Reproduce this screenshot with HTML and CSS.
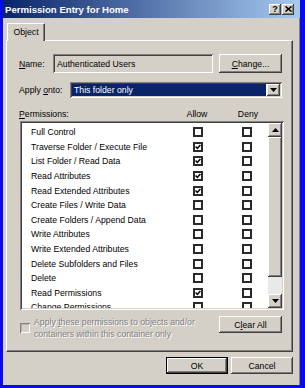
FILE: index.html
```html
<!DOCTYPE html>
<html lang="en">
<head>
  <meta charset="UTF-8" />
  <meta name="viewport" content="width=device-width, initial-scale=1.0"/>
  <title>Permission Entry for Home</title>
  <link rel="stylesheet" href="styles.css">
</head>
<body>
  <div class="window">
    <div class="titlebar">
      <span class="title">Permission Entry for Home</span>
      <div class="titleBtns">
        <span class="tbtn">?</span>
        <span class="tbtn">
          <svg width="7" height="6" viewBox="0 0 7 6"><path d="M0.5 0.5 L6.5 5.5 M6.5 0.5 L0.5 5.5" stroke="#000" stroke-width="1.6"/></svg>
        </span>
      </div>
    </div>

    <div class="tabs">
      <div class="tab">Object</div>
    </div>

    <div class="panel">
      <div class="nameRow">
        <span class="nameLabel"><u>N</u>ame:</span>
        <div class="textbox">Authenticated Users</div>
        <span class="btn changeBtn"><u>C</u>hange...</span>
      </div>

      <div class="applyRow">
        <span class="applyLabel">Apply <u>o</u>nto:</span>
        <div class="select">
          <span class="selText">This folder only</span>
          <span class="dropBtn">
            <svg width="7" height="4" viewBox="0 0 7 4"><polygon points="0,0 7,0 3.5,4" fill="#000"/></svg>
          </span>
        </div>
      </div>

      <div class="permHead">
        <span><u>P</u>ermissions:</span>
        <span class="colHead">Allow</span>
        <span class="colHead">Deny</span>
      </div>

      <div class="list">
        <div class="rows" id="rows"></div>
        <div class="scrollbar">
          <span class="sbBtn">
            <svg width="7" height="4" viewBox="0 0 7 4"><polygon points="0,4 7,4 3.5,0" fill="#000"/></svg>
          </span>
          <span class="sbThumb"></span>
          <span class="sbTrack"></span>
          <span class="sbBtn">
            <svg width="7" height="4" viewBox="0 0 7 4"><polygon points="0,0 7,0 3.5,4" fill="#000"/></svg>
          </span>
        </div>
      </div>

      <div class="bottomRow">
        <div class="applyChild">
          <span class="chk disabled"></span>
          <span class="disabledText">Apply <u>t</u>hese permissions to objects and/or<br>containers within this container only</span>
        </div>
        <span class="btn clearBtn">C<u>l</u>ear All</span>
      </div>
    </div>

    <div class="dialogBtns">
      <span class="btn okBtn">OK</span>
      <span class="btn">Cancel</span>
    </div>
  </div>

  <script>
    const perms = [
      ['Full Control', false],
      ['Traverse Folder / Execute File', true],
      ['List Folder / Read Data', true],
      ['Read Attributes', true],
      ['Read Extended Attributes', true],
      ['Create Files / Write Data', false],
      ['Create Folders / Append Data', false],
      ['Write Attributes', false],
      ['Write Extended Attributes', false],
      ['Delete Subfolders and Files', false],
      ['Delete', false],
      ['Read Permissions', true],
      ['Change Permissions', false]
    ];

    const tick = '<svg width="6" height="6" viewBox="0 0 6 6"><path d="M0.6 2.6 L2.3 4.4 L5.4 0.9" fill="none" stroke="#000" stroke-width="1.5"/></svg>';

    const rows = document.getElementById('rows');
    perms.forEach(([name, allow]) => {
      const row = document.createElement('div');
      row.className = 'permRow';
      row.innerHTML =
        '<span>' + name + '</span>' +
        '<span class="chk">' + (allow ? tick : '') + '</span>' +
        '<span class="chk"></span>';
      rows.appendChild(row);
    });
  </script>
</body>
</html>
```

FILE: styles.css
```css
body {
  margin: 0;
  padding: 0 5px 3px 3px;
  background: #0a0af0;
  font-family: "Liberation Sans", Arial, sans-serif;
  font-size: 8.7px;
  color: #000;
}
u {
  text-decoration: underline;
}

.window {
  height: 385px;
  background: #d4d0c8;
  box-shadow: inset -1px 0 #808080;
}

/* タイトルバー */
.titlebar {
  height: 18px;
  display: flex;
  align-items: center;
  justify-content: space-between;
  padding: 0 6px 0 2px;
  background: linear-gradient(to right, #0a246a, #a6caf0);
}
.title {
  color: #fff;
  font-weight: bold;
  font-size: 9.6px;
}
.titleBtns {
  display: flex;
  gap: 1px;
}
.tbtn {
  width: 12px;
  height: 11px;
  display: flex;
  align-items: center;
  justify-content: center;
  background: #d4d0c8;
  font-weight: bold;
  font-size: 9px;
  box-shadow: inset -1px -1px #404040, inset 1px 1px #fff, inset -2px -2px #808080;
}

/* タブ */
.tabs {
  height: 22px;
  box-sizing: border-box;
  padding: 5px 0 0 4px;
}
.tab {
  position: relative;
  z-index: 1;
  width: 38px;
  height: 18px;
  box-sizing: border-box;
  padding-bottom: 1px;
  display: flex;
  align-items: center;
  justify-content: center;
  background: #d4d0c8;
  border-top: 1px solid #fff;
  border-left: 1px solid #fff;
  border-right: 1px solid #404040;
  box-shadow: inset -1px 0 #808080;
}

.panel {
  margin-left: 3px;
  width: 287px;
  height: 312px;
  box-sizing: border-box;
  padding: 13px 10px 0 12px;
  display: flex;
  flex-direction: column;
  border-top: 1px solid #fff;
  border-left: 1px solid #fff;
  border-right: 1px solid #404040;
  border-bottom: 1px solid #404040;
  box-shadow: inset -1px -1px #808080;
}

/* ボタン */
.btn {
  width: 62px;
  height: 17px;
  box-sizing: border-box;
  display: flex;
  align-items: center;
  justify-content: center;
  background: #d4d0c8;
  box-shadow: inset -1px -1px #404040, inset 1px 1px #fff, inset -2px -2px #808080;
}
.okBtn {
  box-shadow: inset 0 0 0 1px #000, inset -2px -2px #404040, inset 2px 2px #fff, inset -3px -3px #808080;
}

.nameRow {
  height: 19px;
  display: flex;
  align-items: center;
}
.nameLabel {
  width: 34px;
}
.textbox {
  width: 160px;
  height: 19px;
  box-sizing: border-box;
  padding-left: 4px;
  display: flex;
  align-items: center;
  box-shadow: inset 1px 1px #808080, inset -1px -1px #fff, inset 2px 2px #404040, inset -2px -2px #d4d0c8;
}
.changeBtn {
  width: 63px;
  height: 19px;
  margin-left: 6px;
}

.applyRow {
  margin-top: 9px;
  height: 16px;
  display: flex;
  align-items: center;
}
.applyLabel {
  width: 51px;
}
.select {
  width: 212px;
  height: 16px;
  box-sizing: border-box;
  padding: 2px;
  display: flex;
  gap: 1px;
  background: #fff;
  box-shadow: inset 1px 1px #808080, inset -1px -1px #fff, inset 2px 2px #404040, inset -2px -2px #d4d0c8;
}
.selText {
  flex: 1;
  display: flex;
  align-items: center;
  padding-left: 2px;
  background: #0a246a;
  color: #fff;
}
.dropBtn {
  width: 13px;
  display: flex;
  align-items: center;
  justify-content: center;
  background: #d4d0c8;
  box-shadow: inset -1px -1px #404040, inset 1px 1px #fff, inset -2px -2px #808080;
}

.permHead {
  margin-top: 10px;
  height: 11px;
  display: grid;
  grid-template-columns: 163px 51px 30px;
  align-items: center;
}
.colHead {
  width: 30px;
  text-align: center;
}

/* 権限リスト */
.list {
  margin: 2px 0 0 1px;
  width: 264px;
  height: 189px;
  box-sizing: border-box;
  padding: 2px;
  display: flex;
  background: #fff;
  box-shadow: inset 1px 1px #808080, inset -1px -1px #fff, inset 2px 2px #404040, inset -2px -2px #d4d0c8;
}
.rows {
  flex: 1;
  padding: 2px 0 0 9px;
  overflow: hidden;
}
.permRow {
  height: 14.6px;
  display: grid;
  grid-template-columns: 162px 49px 10px;
  align-items: center;
}
.chk {
  width: 10px;
  height: 10px;
  box-sizing: border-box;
  display: flex;
  align-items: center;
  justify-content: center;
  background: #fff;
  border: 2px solid #2a2a2a;
}
.chk.disabled {
  border: none;
  background: #d4d0c8;
  box-shadow: inset 1px 1px #808080, inset -1px -1px #fff, inset 2px 2px #b8b4ac;
}

.scrollbar {
  width: 14px;
  display: flex;
  flex-direction: column;
}
.sbBtn {
  height: 14px;
  display: flex;
  align-items: center;
  justify-content: center;
  background: #d4d0c8;
  box-shadow: inset -1px -1px #404040, inset 1px 1px #fff, inset -2px -2px #808080;
}
.sbThumb {
  height: 140px;
  background: #d4d0c8;
  box-shadow: inset -1px -1px #404040, inset 1px 1px #fff, inset -2px -2px #808080;
}
.sbTrack {
  flex: 1;
  background: #ebe9e5;
}

.bottomRow {
  margin-top: 6px;
  display: flex;
  justify-content: space-between;
  align-items: flex-start;
}
.applyChild {
  margin: 1px 0 0 1px;
  display: flex;
  align-items: flex-start;
  gap: 4px;
}
.applyChild .chk {
  margin-top: 6px;
}
.disabledText {
  line-height: 11.5px;
  color: #808080;
  text-shadow: 1px 1px #fff;
}
.clearBtn {
  width: 63px;
}

.dialogBtns {
  margin: 5px 0 0 3px;
  width: 287px;
  display: flex;
  justify-content: flex-end;
  gap: 3px;
}
```
